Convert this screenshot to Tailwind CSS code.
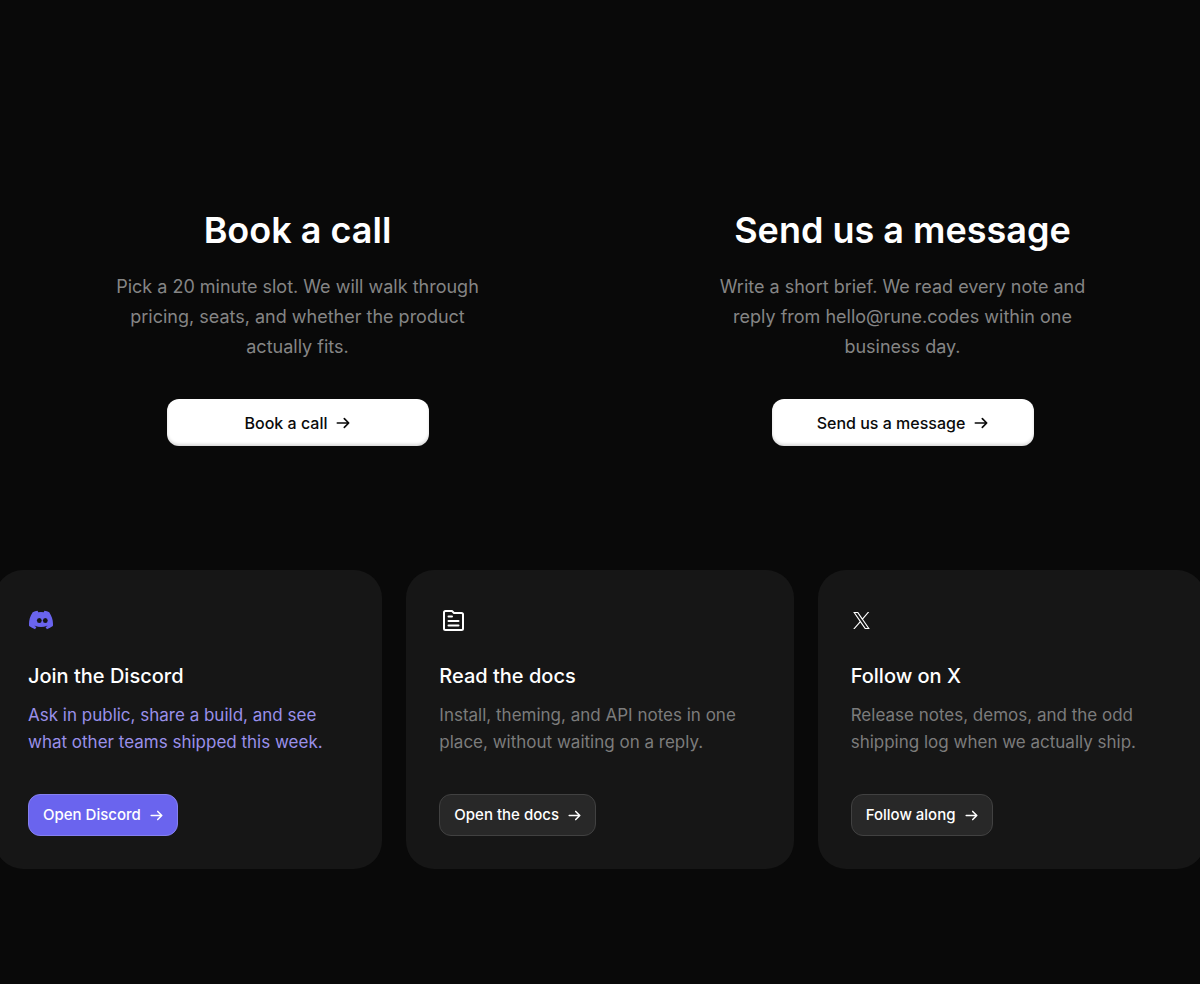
<!DOCTYPE html>
<html lang="en">
<head>
<meta charset="utf-8">
<meta name="viewport" content="width=device-width, initial-scale=1">
<title>Contact</title>
<script src="https://cdn.jsdelivr.net/npm/@tailwindcss/browser@4"></script>
</head>
<body class="min-h-screen overflow-x-hidden bg-[#090909] font-['Inter',sans-serif] text-white antialiased">
<svg class="hidden" aria-hidden="true">
  <symbol id="arrow" viewBox="0 0 16 16"><path d="M1.5 8h13M9.5 3l5 5-5 5" fill="none" stroke="currentColor" stroke-width="1.9" stroke-linecap="round" stroke-linejoin="round"/></symbol>
</svg>
<main class="-mx-[5px] pt-[206px] pb-28">
  <section class="grid grid-cols-2 text-center">
    <div class="flex flex-col items-center">
      <h2 class="text-[36px] leading-12 font-semibold">Book a call</h2>
      <p class="mt-[18px] text-[18px] leading-[30px] text-[#858585]">Pick a 20 minute slot. We will walk through<br>pricing, seats, and whether the product<br>actually fits.</p>
      <a href="#call" class="mt-[37px] flex h-[47px] w-[262px] items-center justify-center gap-[9px] rounded-xl bg-white text-[16px] font-medium text-[#0a0a0a] shadow-[inset_0_-2px_3px_rgba(0,0,0,0.15)]">Book a call <svg class="size-[14px]"><use href="#arrow"/></svg></a>
    </div>
    <div class="flex flex-col items-center">
      <h2 class="text-[36px] leading-12 font-semibold">Send us a message</h2>
      <p class="mt-[18px] text-[18px] leading-[30px] text-[#858585]">Write a short brief. We read every note and<br>reply from hello@rune.codes within one<br>business day.</p>
      <a href="#message" class="mt-[37px] flex h-[47px] w-[262px] items-center justify-center gap-[9px] rounded-xl bg-white text-[16px] font-medium text-[#0a0a0a] shadow-[inset_0_-2px_3px_rgba(0,0,0,0.15)]">Send us a message <svg class="size-[14px]"><use href="#arrow"/></svg></a>
    </div>
  </section>
  <section class="mt-[124px] grid grid-cols-3 gap-6">
    <article class="flex flex-col items-start rounded-[28px] bg-[#161616] p-[33px]">
      <div class="flex h-[34px] items-center">
        <svg class="ml-px size-6 text-[#6a64ee]" viewBox="0 0 24 24" fill="currentColor" aria-hidden="true"><path d="M20.317 4.37a19.8 19.8 0 0 0-4.885-1.515.07.07 0 0 0-.079.037c-.21.375-.444.864-.608 1.25a18.3 18.3 0 0 0-5.487 0 12.6 12.6 0 0 0-.617-1.25.08.08 0 0 0-.079-.037A19.7 19.7 0 0 0 3.677 4.37C.533 9.046-.32 13.58.099 18.058a.08.08 0 0 0 .031.056 19.9 19.9 0 0 0 5.993 3.03.08.08 0 0 0 .084-.028 14 14 0 0 0 1.226-1.994.08.08 0 0 0-.041-.106 13 13 0 0 1-1.872-.892.08.08 0 0 1-.008-.128l.372-.292a.07.07 0 0 1 .078-.01c3.927 1.793 8.18 1.793 12.061 0a.07.07 0 0 1 .079.009l.372.293a.08.08 0 0 1-.006.127 12.3 12.3 0 0 1-1.873.892.08.08 0 0 0-.041.107 16 16 0 0 0 1.225 1.993.08.08 0 0 0 .084.028 19.8 19.8 0 0 0 6.002-3.03.08.08 0 0 0 .032-.054c.5-5.177-.838-9.674-3.549-13.66a.06.06 0 0 0-.031-.03z"/><ellipse cx="10.3" cy="12.6" rx="2.4" ry="2.5" fill="#161616"/><ellipse cx="16.3" cy="12.6" rx="2.4" ry="2.5" fill="#161616"/></svg>
      </div>
      <h3 class="mt-[25px] text-[20px] leading-7 font-medium">Join the Discord</h3>
      <p class="mt-3 text-[17px] leading-[27px] text-[#9a90ea]">Ask in public, share a build, and see<br>what other teams shipped this week.</p>
      <a href="#discord" class="mt-[38px] flex h-[42px] items-center gap-[9px] rounded-xl border border-[#8580ef] bg-[#6a64ee] px-[14px] text-[15px] font-medium">Open Discord <svg class="size-[13px]"><use href="#arrow"/></svg></a>
    </article>
    <article class="flex flex-col items-start rounded-[28px] bg-[#161616] p-[33px]">
      <div class="flex h-[34px] items-center">
        <svg class="ml-1 size-[21px]" viewBox="1.500 1.500 21 21" fill="none" stroke="currentColor" stroke-width="2" stroke-linecap="round" stroke-linejoin="round" aria-hidden="true"><path d="M4 2.500h6.500l2 2H20a1.500 1.500 0 0 1 1.500 1.500v14a1.500 1.500 0 0 1-1.500 1.500H4A1.500 1.500 0 0 1 2.500 20V4A1.500 1.500 0 0 1 4 2.500zM7 8h3.500M7 12.500h10M7 17h10"/></svg>
      </div>
      <h3 class="mt-[25px] text-[20px] leading-7 font-medium">Read the docs</h3>
      <p class="mt-3 text-[17px] leading-[27px] text-[#7c7c7c]">Install, theming, and API notes in one<br>place, without waiting on a reply.</p>
      <a href="#docs" class="mt-[38px] flex h-[42px] items-center gap-[9px] rounded-xl border border-[#414141] bg-[#282828] px-[14px] text-[15px] font-medium">Open the docs <svg class="size-[13px]"><use href="#arrow"/></svg></a>
    </article>
    <article class="flex flex-col items-start rounded-[28px] bg-[#161616] p-[33px]">
      <div class="flex h-[34px] items-center">
        <svg class="ml-0.5 size-[17px]" viewBox="0 0 24 24" fill="currentColor" aria-hidden="true"><path d="M14.234 10.162 22.977 0h-2.072l-7.591 8.824L7.251 0H.258l9.168 13.343L.258 24H2.330l8.016-9.318L16.749 24h6.993zm-2.837 3.299-.929-1.329L3.076 1.560h3.182l5.965 8.532.929 1.329 7.754 11.090h-3.182z"/></svg>
      </div>
      <h3 class="mt-[25px] text-[20px] leading-7 font-medium">Follow on X</h3>
      <p class="mt-3 text-[17px] leading-[27px] text-[#7c7c7c]">Release notes, demos, and the odd<br>shipping log when we actually ship.</p>
      <a href="#x" class="mt-[38px] flex h-[42px] items-center gap-[9px] rounded-xl border border-[#414141] bg-[#282828] px-[14px] text-[15px] font-medium">Follow along <svg class="size-[13px]"><use href="#arrow"/></svg></a>
    </article>
  </section>
</main>
</body>
</html>
